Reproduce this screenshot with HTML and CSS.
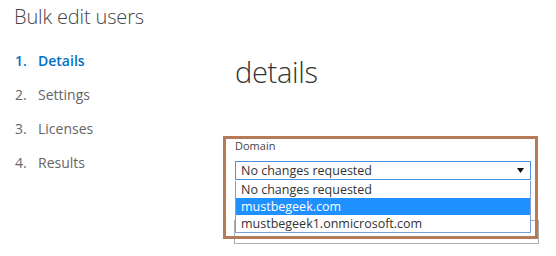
FILE: index.html
```html
<!DOCTYPE html>
<html>
<head>
<meta charset="utf-8">
<link rel="stylesheet" href="styles.css">
</head>
<body>
<div class="page">
  <h1 class="title">Bulk edit users</h1>
  <div class="main">
    <ol class="steps">
      <li class="step active"><span class="num">1.</span><span>Details</span></li>
      <li class="step"><span class="num">2.</span><span>Settings</span></li>
      <li class="step"><span class="num">3.</span><span>Licenses</span></li>
      <li class="step"><span class="num">4.</span><span>Results</span></li>
    </ol>
    <div class="content">
      <h2 class="heading">details</h2>
      <div class="field">
        <div class="label">Domain</div>
        <div class="select-wrap">
          <div class="select">
            <span class="select-text">No changes requested</span>
            <svg class="arrow" width="7" height="5" viewBox="0 0 7 5"><path d="M0 0H7L3.5 5Z" fill="#111"/></svg>
          </div>
          <ul class="options">
            <li class="option">No changes requested</li>
            <li class="option selected">mustbegeek.com</li>
            <li class="option">mustbegeek1.onmicrosoft.com</li>
          </ul>
        </div>
      </div>
      <div class="next-field"></div>
    </div>
  </div>
  <div class="highlight"></div>
</div>
</body>
</html>
```
FILE: styles.css
```css
* { box-sizing: border-box; }
html, body { margin: 0; padding: 0; background: #fff; }
body {
  width: 556px;
  height: 256px;
  overflow: hidden;
  font-family: "Open Sans", "Noto Sans", sans-serif;
  color: #444;
}
.page { position: relative; height: 256px; padding-top: 3px; }
.title {
  margin: 0 0 0 14px;
  font-size: 20px;
  font-weight: 300;
  line-height: 28px;
  color: #444;
  letter-spacing: -0.15px;
}
.main { display: flex; }
.steps {
  list-style: none;
  margin: 20px 0 0 0;
  padding: 0 0 0 15px;
  width: 235px;
}
.step {
  display: flex;
  font-size: 14px;
  line-height: 20px;
  height: 34px;
  color: #666;
}
.step .num { width: 23px; }
.step.active { color: #0072c6; font-weight: 600; }
.content {
  flex: 1;
  padding-top: 23px;
}
.heading {
  margin: 0;
  font-size: 29px;
  font-weight: 300;
  line-height: 36px;
  color: #333;
  letter-spacing: -0.3px;
}
.field { margin-top: 48px; width: 296px; }
.label {
  font-size: 11px;
  line-height: 16px;
  color: #444;
}
.select-wrap { position: relative; margin-top: 7px; }
.select {
  height: 19px;
  border: 1px solid #4a8fe0;
  display: flex;
  align-items: center;
  justify-content: space-between;
  padding: 0 6px 0 5px;
}
.select-text {
  font-size: 12.5px;
  line-height: 17px;
  color: #333;
}
.arrow { display: block; }
.options {
  position: absolute;
  left: 0;
  top: 20px;
  width: 296px;
  margin: 0;
  padding: 0;
  list-style: none;
  background: #fff;
  border: 1px solid #7d9fd6;
  border-top: none;
  z-index: 2;
}
.option {
  height: 17px;
  line-height: 17px;
  padding-left: 5px;
  font-size: 12.5px;
  color: #333;
}
.option.selected { background: #1e90ff; color: #fff; }
.next-field {
  margin-top: 40px;
  margin-left: -1px;
  width: 305px;
  height: 24px;
  border: 1px solid #a8b0b0;
}
.highlight {
  position: absolute;
  left: 223px;
  top: 136px;
  width: 315px;
  height: 103px;
  border: 3.5px solid #b57a58;
  z-index: 3;
}
```
